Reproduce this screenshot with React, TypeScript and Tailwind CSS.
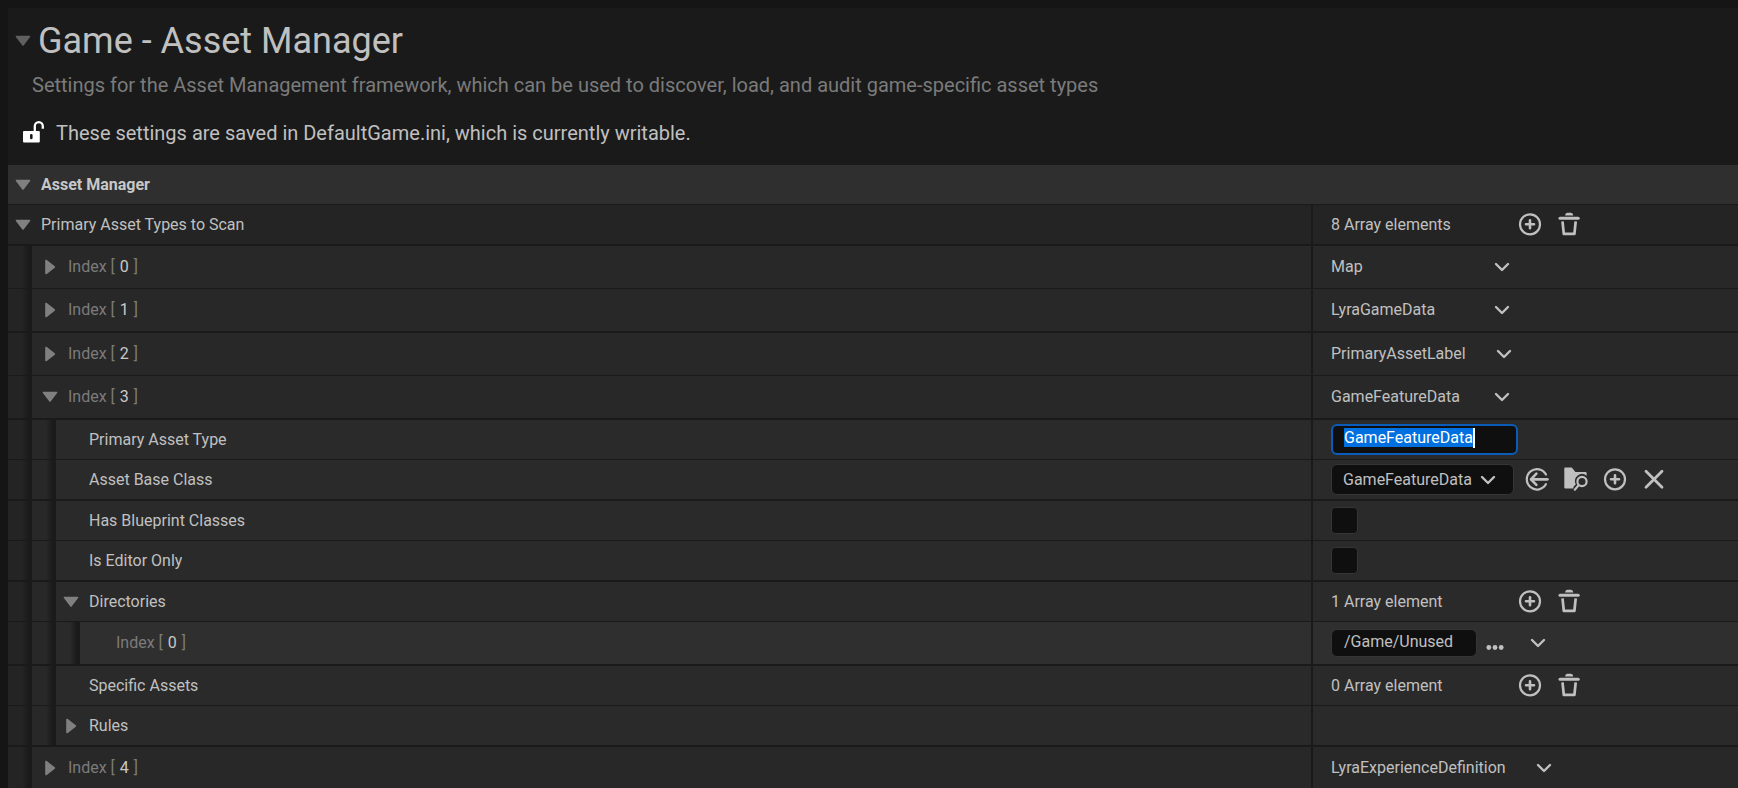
import { useEffect, useRef, type ReactNode } from "react";

const DEPTH_BG = ["bg-[#242424]", "bg-[#282828]", "bg-[#2a2a2a]", "bg-[#2f2f2f]"];

function Arrow({ open, className = "text-[#808080]" }: { open: boolean; className?: string }) {
  return open ? (
    <svg width="16" height="12" viewBox="0 0 16 12" className={className} aria-hidden="true">
      <path d="M1.5 1.5H14.5L8 10Z" fill="currentColor" stroke="currentColor" strokeWidth="1.6" strokeLinejoin="round" />
    </svg>
  ) : (
    <svg width="12" height="16" viewBox="0 0 12 16" className={className} aria-hidden="true">
      <path d="M2 1.5V14.5L10.3 8Z" fill="currentColor" stroke="currentColor" strokeWidth="1.6" strokeLinejoin="round" />
    </svg>
  );
}

function Chevron() {
  return (
    <svg width="16" height="10" viewBox="0 0 16 10" fill="none" stroke="currentColor" strokeWidth="2.4" strokeLinecap="round" strokeLinejoin="round" aria-hidden="true">
      <path d="M2 2L8 8L14 2" />
    </svg>
  );
}

function Glyph({ children }: { children: ReactNode }) {
  return (
    <svg width="25" height="25" viewBox="0 0 25 25" fill="none" stroke="currentColor" strokeWidth="2.4" aria-hidden="true">
      {children}
    </svg>
  );
}

const AddIcon = () => (
  <Glyph>
    <circle cx="12" cy="12.3" r="10" strokeWidth="2.2" />
    <path d="M12 8.3V16.3M8 12.3H16" strokeLinecap="round" strokeWidth="2.6" />
  </Glyph>
);

const TrashIcon = () => (
  <Glyph>
    <path d="M8 3.6Q8.3 0.8 10.3 0.8H13.9Q16 0.8 16.3 3.6Z" fill="currentColor" stroke="none" />
    <path d="M3 6.2H21.2" strokeWidth="3" strokeLinecap="round" />
    <path d="M5.5 9.3L6.8 21.8H17.4L18.7 9.3" strokeWidth="2.7" strokeLinejoin="round" />
  </Glyph>
);

const UseSelectedIcon = () => (
  <Glyph>
    <path d="M21 7.5A10.2 10.2 0 1 0 21 17.1" strokeLinecap="round" strokeWidth="2.2" />
    <path d="M22.4 12.3H6.4" strokeWidth="2.8" strokeLinecap="round" />
    <path d="M11.4 6.7L6 12.3L11.4 17.9" strokeLinecap="round" strokeLinejoin="round" strokeWidth="2.6" />
  </Glyph>
);

const BrowseIcon = () => (
  <Glyph>
    <path d="M0.3 1.4Q0.3 0.6 1.1 0.6H7.3Q7.9 0.6 8.4 1.2L11.4 5H21.6Q22.6 5 22.6 6V8.8A7 7 0 0 0 11.8 17.3L9.4 19.9V21.4H1.1Q0.3 21.4 0.3 20.6Z" fill="currentColor" stroke="none" />
    <circle cx="18" cy="14.5" r="4.6" strokeWidth="2.2" />
    <path d="M14.6 18.3L10.8 22.7" strokeLinecap="round" strokeWidth="2.2" />
  </Glyph>
);

const ClearIcon = () => (
  <Glyph>
    <path d="M4 4.3L20 20.3M20 4.3L4 20.3" strokeLinecap="round" strokeWidth="2.8" />
  </Glyph>
);

function IconButton({ label, children }: { label: string; children: ReactNode }) {
  return (
    <button type="button" aria-label={label} className="flex h-[25px] w-[39px] shrink-0 items-center justify-center text-[#c0c0c0]">
      {children}
    </button>
  );
}

type RowProps = {
  depth: number;
  label: ReactNode;
  labelFor?: string;
  name: string;
  open?: boolean;
  indexed?: boolean;
  thick?: boolean;
  children?: ReactNode;
};

function Row({ depth, label, labelFor, name, open, indexed, thick, children }: RowProps) {
  const text = "truncate text-base leading-5";
  return (
    <div className={`grid grid-cols-[1303fr_427fr] border-[#1a1a1a] ${indexed ? (thick ? "h-[44px]" : "h-[43px]") : thick ? "h-[41px]" : "h-[40px]"} ${thick ? "border-b-2" : "border-b"}`}>
      <div className="flex min-w-0">
        {DEPTH_BG.slice(0, depth).map((bg) => (
          <div key={bg} className={`flex w-6 shrink-0 justify-end ${bg}`}>
            <div className="-mb-0.5 w-2.5 bg-linear-to-r from-transparent to-[#1a1a1a] to-70%" />
          </div>
        ))}
        <div className={`flex min-w-0 flex-1 items-center gap-[3px] ${DEPTH_BG[depth]} ${indexed ? "pl-[3px]" : ""}`}>
          {open === undefined ? (
            <div className="w-[30px] shrink-0" />
          ) : (
            <button type="button" aria-expanded={open} aria-label={`Toggle ${name}`} className="flex h-6 w-[30px] shrink-0 items-center justify-center">
              <Arrow open={open} />
            </button>
          )}
          {labelFor ? (
            <label htmlFor={labelFor} className={text}>{label}</label>
          ) : (
            <span className={text}>{label}</span>
          )}
        </div>
      </div>
      <div className={`flex min-w-0 items-center border-l-2 border-[#1a1a1a] pl-[18px] ${DEPTH_BG[depth]}`}>{children}</div>
    </div>
  );
}

function IndexLabel({ index }: { index: number }) {
  return (
    <span className="text-[#7b7b7b]">
      Index [ <span className="px-px text-[#c8c8c8]">{index}</span> ]
    </span>
  );
}

function ElementRow({ index, value, open = false, thick }: { index: number; value: string; open?: boolean; thick?: boolean }) {
  return (
    <Row depth={1} indexed open={open} thick={thick} name={`index ${index}`} label={<IndexLabel index={index} />}>
      <span className="min-w-[133px] text-base leading-5">{value}</span>
      <button type="button" aria-label={`Options for ${value}`} className="ml-[30px] flex h-6 w-4 items-center justify-center">
        <Chevron />
      </button>
    </Row>
  );
}

function ArrayValue({ text }: { text: string }) {
  return (
    <>
      <span className="w-[180px] text-base leading-5">{text}</span>
      <IconButton label="Add element"><AddIcon /></IconButton>
      <IconButton label="Remove all elements"><TrashIcon /></IconButton>
    </>
  );
}

const CHECKBOX = "size-[27px] appearance-none rounded border border-[#353535] bg-[#0f0f0f] checked:bg-[#0070e0]";

export default function App() {
  const typeInput = useRef<HTMLInputElement>(null);

  useEffect(() => {
    typeInput.current?.focus();
    typeInput.current?.select();
  }, []);

  return (
    <main className="h-screen overflow-hidden bg-[#151515] pt-2 pl-2 font-[Roboto,sans-serif] text-base text-[#c0c0c0]">
      <header className="bg-[#1a1a1a] pt-[13px] pb-5">
        <div className="flex items-center">
          <button type="button" aria-expanded="true" aria-label="Toggle Game - Asset Manager" className="flex h-6 w-[30px] items-center justify-center">
            <Arrow open className="text-[#606060]" />
          </button>
          <h1 className="text-[36px] leading-10">Game - Asset Manager</h1>
        </div>
        <p className="mt-3 pl-6 text-xl leading-6 text-[#7b7b7b]">
          Settings for the Asset Management framework, which can be used to discover, load, and audit game-specific asset types
        </p>
        <div className="mt-6 flex items-center gap-3 pl-[15px]">
          <svg width="21" height="24" viewBox="0 0 21 24" aria-hidden="true">
            <path d="M11.8 10.5V5.2A4 4 0 0 1 19.8 5.2V7.8" fill="none" stroke="#fff" strokeWidth="2.3" />
            <path fillRule="evenodd" fill="#fff" d="M1 10H15.8Q16.8 10 16.8 11V20.4Q16.8 21.4 15.8 21.4H1Q0 21.4 0 20.4V11Q0 10 1 10ZM8.3 13Q7 13 7 14.3V17Q7 18.3 8.3 18.3Q9.6 18.3 9.6 17V14.3Q9.6 13 8.3 13Z" />
          </svg>
          <p className="text-xl leading-6">These settings are saved in DefaultGame.ini, which is currently writable.</p>
        </div>
      </header>

      <section>
        <div className="flex h-10 items-center gap-[3px] border-b border-[#1a1a1a] bg-[#2f2f2f]">
          <button type="button" aria-expanded="true" aria-label="Toggle Asset Manager" className="flex h-6 w-[30px] items-center justify-center">
            <Arrow open />
          </button>
          <h2 className="text-base leading-5 font-bold text-[#c8c8c8]">Asset Manager</h2>
        </div>

        <Row depth={0} open thick name="Primary Asset Types to Scan" label="Primary Asset Types to Scan">
          <ArrayValue text="8 Array elements" />
        </Row>
        <ElementRow index={0} value="Map" />
        <ElementRow index={1} value="LyraGameData" thick />
        <ElementRow index={2} value="PrimaryAssetLabel" />
        <ElementRow index={3} value="GameFeatureData" open thick />

        <Row depth={2} name="Primary Asset Type" label="Primary Asset Type" labelFor="asset-type">
          <div className="relative">
            <input
              id="asset-type"
              ref={typeInput}
              type="text"
              defaultValue="GameFeatureData"
              className="block h-[31px] w-[187px] rounded-md border-2 border-[#0a5cb8] bg-[#0f0f0f] pb-1 pl-[11px] text-base text-white outline-none selection:bg-[#0070e0] selection:text-white"
            />
            <span className="absolute top-1 left-[142px] h-5 w-0.5 bg-white" />
          </div>
        </Row>
        <Row depth={2} thick name="Asset Base Class" label="Asset Base Class" labelFor="base-class">
          <div className="relative mr-1">
            <select id="base-class" className="block h-[31px] w-[183px] appearance-none rounded-md border border-[#353535] bg-[#0f0f0f] pl-[11px] text-base">
              <option>GameFeatureData</option>
            </select>
            <span className="pointer-events-none absolute inset-y-0 right-[18px] flex items-center">
              <Chevron />
            </span>
          </div>
          <IconButton label="Use selected class"><UseSelectedIcon /></IconButton>
          <IconButton label="Browse to class"><BrowseIcon /></IconButton>
          <IconButton label="Create new class"><AddIcon /></IconButton>
          <IconButton label="Clear class"><ClearIcon /></IconButton>
        </Row>
        <Row depth={2} name="Has Blueprint Classes" label="Has Blueprint Classes" labelFor="has-blueprint">
          <input id="has-blueprint" type="checkbox" className={CHECKBOX} />
        </Row>
        <Row depth={2} thick name="Is Editor Only" label="Is Editor Only" labelFor="editor-only">
          <input id="editor-only" type="checkbox" className={CHECKBOX} />
        </Row>
        <Row depth={2} open name="Directories" label="Directories">
          <ArrayValue text="1 Array element" />
        </Row>
        <Row depth={3} indexed thick name="directory 0" label={<IndexLabel index={0} />} labelFor="directory-0">
          <input
            id="directory-0"
            type="text"
            defaultValue="/Game/Unused"
            className="h-7 w-[146px] rounded-md border border-[#353535] bg-[#0f0f0f] pb-[3px] pl-3 text-base outline-none"
          />
          <button type="button" aria-label="Choose a directory" className="ml-2 flex h-6 w-5 items-end justify-center pb-[5px]">
            <svg width="18" height="5" viewBox="0 0 18 5" fill="currentColor" aria-hidden="true">
              <circle cx="2.8" cy="2.5" r="2.4" />
              <circle cx="9" cy="2.5" r="2.4" />
              <circle cx="15.2" cy="2.5" r="2.4" />
            </svg>
          </button>
          <button type="button" aria-label="Directory options" className="ml-[25px] flex h-6 w-4 items-center justify-center">
            <Chevron />
          </button>
        </Row>
        <Row depth={2} name="Specific Assets" label="Specific Assets">
          <ArrayValue text="0 Array element" />
        </Row>
        <Row depth={2} open={false} thick name="Rules" label="Rules" />
        <ElementRow index={4} value="LyraExperienceDefinition" />
      </section>
    </main>
  );
}
